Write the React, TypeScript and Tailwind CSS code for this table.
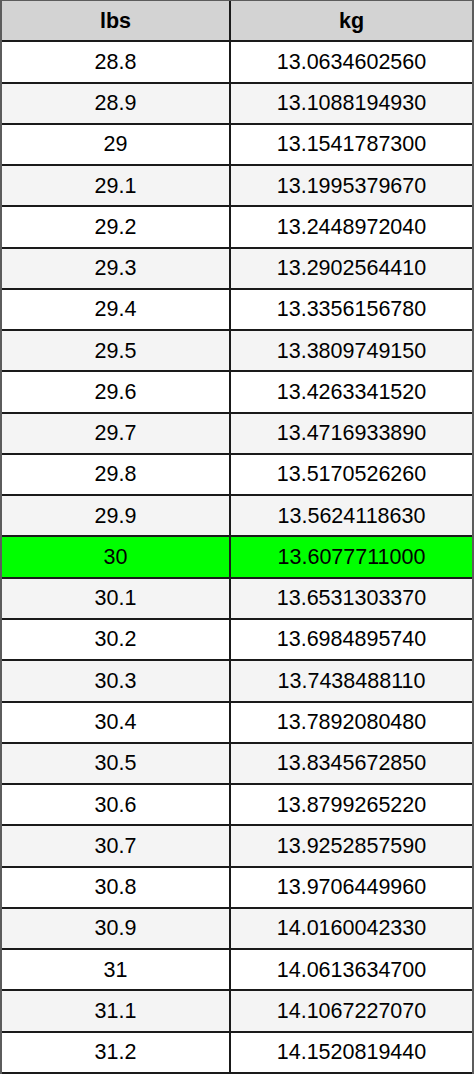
const rows: [string, string][] = [
  ['28.8', '13.0634602560'],
  ['28.9', '13.1088194930'],
  ['29', '13.1541787300'],
  ['29.1', '13.1995379670'],
  ['29.2', '13.2448972040'],
  ['29.3', '13.2902564410'],
  ['29.4', '13.3356156780'],
  ['29.5', '13.3809749150'],
  ['29.6', '13.4263341520'],
  ['29.7', '13.4716933890'],
  ['29.8', '13.5170526260'],
  ['29.9', '13.5624118630'],
  ['30', '13.6077711000'],
  ['30.1', '13.6531303370'],
  ['30.2', '13.6984895740'],
  ['30.3', '13.7438488110'],
  ['30.4', '13.7892080480'],
  ['30.5', '13.8345672850'],
  ['30.6', '13.8799265220'],
  ['30.7', '13.9252857590'],
  ['30.8', '13.9706449960'],
  ['30.9', '14.0160042330'],
  ['31', '14.0613634700'],
  ['31.1', '14.1067227070'],
  ['31.2', '14.1520819440'],
];

export default function App() {
  return (
    <div className="w-[474px] h-[1077px] bg-white font-['Liberation_Sans',Arial,sans-serif] text-[21.5px] text-black">
      <div className="h-[1074px] flex flex-col border-x-2 border-t border-[#5c5c5c]">
        <div className="flex-1 flex bg-[#d3d3d3] border-b-2 border-[#1a1a1a] font-bold">
          <div className="w-[229px] flex items-center justify-center border-r-2 border-[#1a1a1a]">lbs</div>
          <div className="flex-1 flex items-center justify-center">kg</div>
        </div>
        {rows.map(([lbs, kg], i) => {
          const bg = lbs === '30' ? 'bg-[#00ff00]' : i % 2 === 1 ? 'bg-[#f4f4f4]' : 'bg-white';
          return (
            <div key={lbs} className={`flex-1 flex border-b-2 border-[#1a1a1a] ${bg}`}>
              <div className="w-[229px] flex items-center justify-center border-r-2 border-[#1a1a1a]">{lbs}</div>
              <div className="flex-1 flex items-center justify-center">{kg}</div>
            </div>
          );
        })}
      </div>
    </div>
  );
}
